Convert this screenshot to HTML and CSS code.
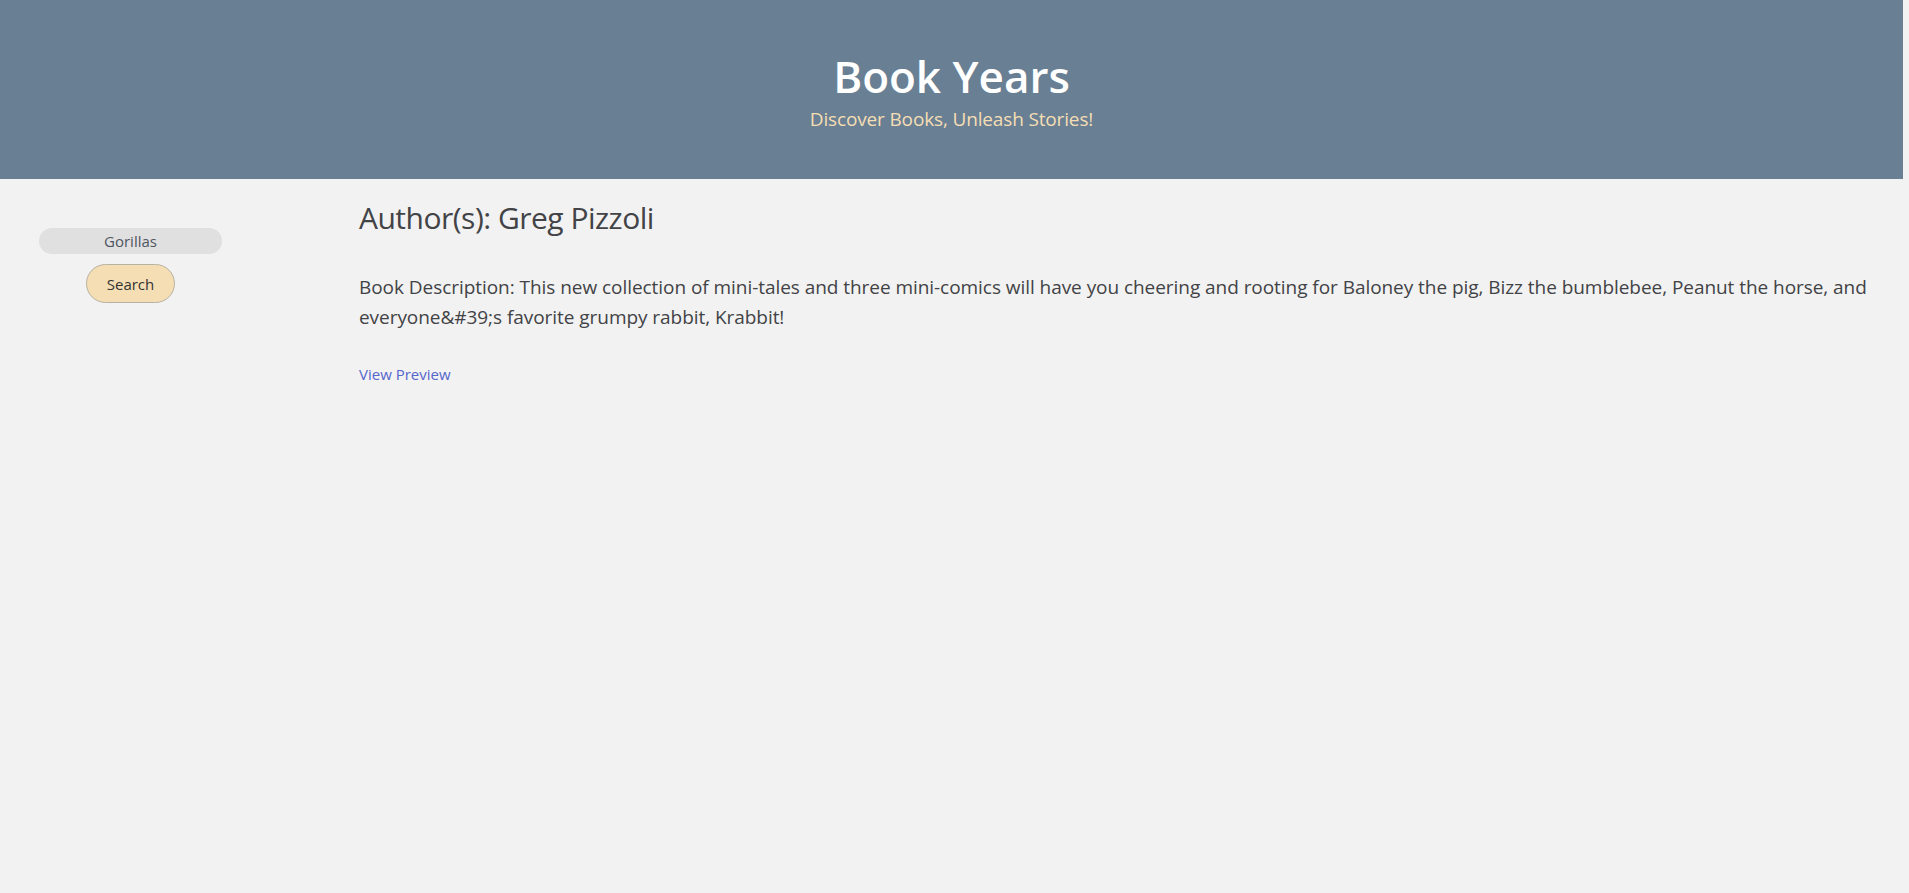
FILE: index.html
```html
<!DOCTYPE html>
<html lang="en">
<head>
<meta charset="utf-8">
<title>Book Years</title>
<link rel="stylesheet" href="styles.css">
</head>
<body>
<header class="site-header">
  <h1 class="site-title">Book Years</h1>
  <p class="site-tagline">Discover Books, Unleash Stories!</p>
</header>
<main class="layout">
  <aside class="sidebar">
    <form class="search-form">
      <input class="search-input" type="text" value="Gorillas">
      <button class="search-button" type="button">Search</button>
    </form>
  </aside>
  <section class="book">
    <h2 class="book-authors">Author(s): Greg Pizzoli</h2>
    <p class="book-description">Book Description: This new collection of mini-tales and three mini-comics will have you cheering and rooting for Baloney the pig, Bizz the bumblebee, Peanut the horse, and everyone&amp;#39;s favorite grumpy rabbit, Krabbit!</p>
    <a class="book-preview" href="#">View Preview</a>
  </section>
</main>
</body>
</html>
```
FILE: styles.css
```css
html, body {
  margin: 0;
  padding: 0;
  background: #f2f2f2;
}
body {
  font-family: "Open Sans", "Noto Sans", sans-serif;
  color: #424346;
  min-height: 893px;
}
.site-header {
  background: #697f94;
  margin-right: 6px;
  padding: 50px 0 48px;
  text-align: center;
}
.site-title {
  margin: 0;
  font-size: 44px;
  line-height: 53px;
  font-weight: 600;
  color: #ffffff;
}
.site-tagline {
  margin: 5px 0 0;
  font-size: 19px;
  line-height: 23px;
  letter-spacing: -0.15px;
  color: #f5deb3;
}
.layout {
  display: flex;
  align-items: flex-start;
}
.sidebar {
  width: 261px;
  flex: none;
  padding-top: 49px;
}
.search-form {
  display: flex;
  flex-direction: column;
  align-items: center;
  gap: 10px;
}
.search-input {
  box-sizing: border-box;
  width: 183px;
  height: 26px;
  border: none;
  border-radius: 13px;
  background: #e0e0e0;
  color: #4f5561;
  font-family: inherit;
  font-size: 15px;
  text-align: center;
  padding: 0 8px;
  outline: none;
}
.search-button {
  box-sizing: border-box;
  height: 39px;
  padding: 0 20px;
  border: 1px solid #b8b2a4;
  border-radius: 20px;
  background: #f5deb3;
  color: #333333;
  font-family: inherit;
  font-size: 15px;
}
.book {
  flex: 1;
  padding: 21px 18px 0 98px;
}
.book-authors {
  margin: 0;
  font-size: 30px;
  line-height: 36px;
  letter-spacing: -0.5px;
  font-weight: 400;
  color: #424346;
}
.book-description {
  margin: 36px 0 0;
  font-size: 19px;
  line-height: 30px;
  letter-spacing: -0.05px;
}
.book-preview {
  display: inline-block;
  margin-top: 31px;
  font-size: 15px;
  line-height: 22px;
  color: #5566cc;
  text-decoration: none;
}
```
